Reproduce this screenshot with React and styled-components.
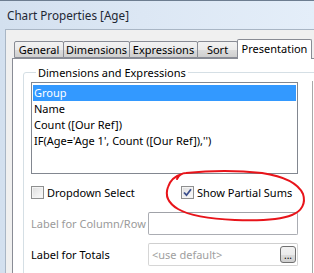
import React from "react"
import styled, { createGlobalStyle } from "styled-components"

const GlobalStyle = createGlobalStyle`
  html, body {
    margin: 0;
    padding: 0;
    overflow: hidden;
  }
  body {
    font-family: "Noto Sans", "Open Sans", sans-serif;
    font-size: 11px;
    color: #000;
  }
`

const Window = styled.div`
  position: relative;
  width: 314px;
  height: 273px;
  overflow: hidden;
  background: linear-gradient(90deg, #d3e0ef 0%, #dce7f4 45%, #e4eef9 100%);
  border-top: 1px solid #6d7d90;
  box-sizing: border-box;
`

const TitleBar = styled.div`
  height: 28px;
  display: flex;
  align-items: center;
  padding-left: 7px;
  font-size: 11.7px;
  color: #1e2733;
`

const Client = styled.div`
  margin-left: 5px;
  height: 244px;
  background: #f0f0f0;
  border-top: 1px solid #a9b6c5;
  border-left: 1px solid #a9b6c5;
  padding: 8px 0 0 6px;
  box-sizing: border-box;
`

const TabStrip = styled.div`
  display: flex;
  align-items: flex-end;
  padding-left: 2px;
  height: 20px;
  position: relative;
  z-index: 1;
`

const Tab = styled.div`
  width: ${p => p.$w}px;
  height: ${p => (p.$active ? 20 : 17)}px;
  box-sizing: border-box;
  border: 1px solid #898c95;
  border-bottom: ${p => (p.$active ? "none" : "1px solid #898c95")};
  border-radius: 2px 2px 0 0;
  margin-right: ${p => (p.$overlap ? -1 : 0)}px;
  background: ${p =>
    p.$active ? "#fff" : "linear-gradient(#f2f2f2 0%, #ebebeb 50%, #dddddd 51%, #cfcfcf 100%)"};
  display: flex;
  align-items: ${p => (p.$active ? "flex-start" : "center")};
  padding-top: ${p => (p.$active ? 1 : 0)}px;
  justify-content: center;
  white-space: nowrap;
  margin-bottom: ${p => (p.$active ? -1 : 0)}px;
`

const Panel = styled.div`
  background: #fff;
  border: 1px solid #898c95;
  border-right: none;
  height: 240px;
  padding: 6px 0 0 10px;
  box-sizing: border-box;
`

const GroupBox = styled.fieldset`
  margin: 0;
  width: 330px;
  border: 1px solid #d5dfe5;
  border-radius: 3px;
  padding: 2px 0 0 7px;
  height: 240px;
  box-sizing: border-box;
`

const Legend = styled.legend`
  padding: 0 2px;
  margin-left: 5px;
  line-height: 15px;
  color: #000;
`

const GroupBody = styled.div`
  display: flex;
`

const MainColumn = styled.div`
  width: 267px;
  display: flex;
  flex-direction: column;
`

const SideColumn = styled.div`
  margin-left: 14px;
  margin-top: -1px;
  border-left: 1px solid #a8a8a8;
  width: 20px;
  height: 200px;
`

const ListBox = styled.div`
  height: 92px;
  border: 1px solid #828790;
  padding: 2px 1px;
  box-sizing: border-box;
  background: #fff;
`

const ListItem = styled.div`
  height: 16px;
  line-height: 16px;
  padding-left: 1px;
  white-space: nowrap;
  background: ${p => (p.$selected ? "#3399ff" : "transparent")};
  color: ${p => (p.$selected ? "#fff" : "#000")};
`

const CheckRow = styled.div`
  display: flex;
  margin-top: 12px;
  height: 13px;
  align-items: center;
`

const CheckItem = styled.label`
  display: flex;
  align-items: center;
  gap: 3px;
  width: ${p => p.$w}px;
  white-space: nowrap;
`

const Box = styled.span`
  width: 13px;
  height: 13px;
  box-sizing: border-box;
  border: 1px solid #8e8f8f;
  background: linear-gradient(135deg, #dcdcdc 0%, #f0f0f0 60%, #fbfbfb 100%);
  box-shadow: inset 0 0 0 1px #f4f4f4;
  display: flex;
  align-items: center;
  justify-content: center;
`

const FieldRow = styled.div`
  display: flex;
  align-items: center;
  margin-top: ${p => p.$mt}px;
`

const FieldLabel = styled.span`
  width: 117px;
  color: ${p => (p.$disabled ? "#9a9a9a" : "#000")};
  white-space: nowrap;
`

const TextInput = styled.div`
  width: 150px;
  height: 23px;
  box-sizing: border-box;
  border: 1px solid ${p => (p.$disabled ? "#d6d6d6" : "#abadb3")};
  border-top-color: ${p => (p.$disabled ? "#cfcfcf" : "#a0a2a8")};
  border-radius: 2px;
  background: #fff;
  display: flex;
  align-items: center;
  justify-content: space-between;
  padding: 0 1px 0 3px;
  color: #a0a0a0;
`

const SmallButton = styled.div`
  width: 16px;
  height: 17px;
  box-sizing: border-box;
  border: 1px solid #707070;
  border-radius: 3px;
  background: linear-gradient(#f2f2f2 0%, #ebebeb 50%, #dddddd 51%, #cfcfcf 100%);
  display: flex;
  align-items: flex-end;
  justify-content: center;
  font-size: 10px;
  line-height: 10px;
  padding-bottom: 2px;
  color: #000;
`

const Scribble = styled.svg`
  position: absolute;
  left: 0;
  top: 0;
  pointer-events: none;
`

const tabs = [
  { label: "General", w: 50 },
  { label: "Dimensions", w: 67 },
  { label: "Expressions", w: 69 },
  { label: "Sort", w: 41 },
  { label: "Presentation", w: 75, active: true },
]

const items = ["Group", "Name", "Count ([Our Ref])", "IF(Age='Age 1', Count ([Our Ref]),'')"]

const Check = () => (
  <svg width="9" height="9" viewBox="0 0 9 9">
    <path d="M1 4.5 L3.5 7.2 L8 1.2" fill="none" stroke="#3c4f8c" strokeWidth="1.8" />
  </svg>
)

export default function App() {
  return (
    <>
      <GlobalStyle />
      <Window>
        <TitleBar>Chart Properties [Age]</TitleBar>
        <Client>
          <TabStrip>
            {tabs.map(t => (
              <Tab key={t.label} $w={t.w} $active={t.active} $overlap={!t.active}>
                {t.label}
              </Tab>
            ))}
          </TabStrip>
          <Panel>
            <GroupBox>
              <Legend>Dimensions and Expressions</Legend>
              <GroupBody>
                <MainColumn>
                  <ListBox>
                    {items.map((it, i) => (
                      <ListItem key={it} $selected={i === 0}>{it}</ListItem>
                    ))}
                  </ListBox>
                  <CheckRow>
                    <CheckItem $w={150}>
                      <Box />
                      Dropdown Select
                    </CheckItem>
                    <CheckItem>
                      <Box><Check /></Box>
                      Show Partial Sums
                    </CheckItem>
                  </CheckRow>
                  <FieldRow $mt={13}>
                    <FieldLabel $disabled>Label for Column/Row</FieldLabel>
                    <TextInput />
                  </FieldRow>
                  <FieldRow $mt={8}>
                    <FieldLabel>Label for Totals</FieldLabel>
                    <TextInput $disabled>
                      &lt;use default&gt;
                      <SmallButton>...</SmallButton>
                    </TextInput>
                  </FieldRow>
                </MainColumn>
                <SideColumn />
              </GroupBody>
            </GroupBox>
          </Panel>
        </Client>
        <Scribble width="314" height="273" viewBox="0 0 314 273">
          <path
            d="M177 178 C179 174 181 172 186 172 C205 170 235 169 262 172 C282 175 298 182 303 193 C306 202 302 210 292 214 C280 219 262 220 235 219 C210 218 190 215 178 208 C168 202 165 194 168 186 C170 180 175 175 182 173"
            fill="none"
            stroke="#e8141a"
            strokeWidth="2"
            strokeLinecap="round"
          />
        </Scribble>
      </Window>
    </>
  )
}
